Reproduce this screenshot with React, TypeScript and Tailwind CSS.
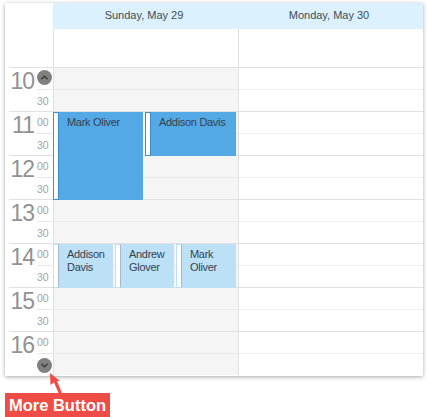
import { ChevronDown, ChevronUp } from "lucide-react"

const hours = [10, 11, 12, 13, 14, 15, 16]

const Event = ({ cls, dark, children }: { cls: string; dark?: boolean; children: string }) => (
  <div className={`absolute flex ${cls} ${dark ? "bg-[#53a9e6]" : "bg-[#bce1f7]"}`}>
    <div className={`w-[6px] shrink-0 bg-white border ${dark ? "border-[#3d8fcb]" : "border-[#bce1f7] border-r-[#a4b9c9]"}`} />
    <div className="pl-[8px] pt-[4px] text-[11px] leading-[13px] tracking-[-0.3px] text-[#37424f]">{children}</div>
  </div>
)

export default function App() {
  return (
    <div className="relative w-[428px] h-[417px] bg-white overflow-hidden font-['Liberation_Sans',sans-serif]">
      <div className="absolute left-[5px] top-[3px] w-[418px] h-[373px] bg-white shadow-[0_1px_4px_rgba(0,0,0,0.35)] flex">
        {/* time ruler */}
        <div className="w-[48px] shrink-0 flex flex-col">
          <div className="h-[64px] shrink-0" />
          {hours.map((h) => (
            <div key={h} className="h-[44px] shrink-0 flex ml-[4px] border-t border-[#e0e0e0] first:border-t-transparent w-[44px]">
              <div className="w-[28px] text-right pr-[3px] text-[23px] leading-[30px] mt-[-2px] text-[#929292] tracking-[-1px]">{h}</div>
              <div className="flex-1 flex flex-col text-[10.5px] text-[#a3a3a3]">
                <div className="h-[22px] shrink-0 border-b border-[#e8e8e8] leading-[20px]">{h === 10 ? "" : "00"}</div>
                <div className="h-[21px] leading-[22px]">{h === 16 ? "" : "30"}</div>
              </div>
            </div>
          ))}
        </div>

        <div className="flex-1 flex flex-col">
          <div className="h-[26px] shrink-0 bg-[#dbf2fe] flex text-[11px] leading-[25px] text-[#3f4a5a] text-center">
            <div className="w-[186px] pr-[4px]">Sunday, May 29</div>
            <div className="flex-1 pr-[4px]">Monday, May 30</div>
          </div>
          <div className="relative flex-1 flex border-l border-[#e0e0e0]">
            <div className="w-[185px] border-r border-[#e0e0e0] flex flex-col">
              <div className="h-[38px] shrink-0 bg-white" />
              {hours.map((h) => (
                <div key={h} className="h-[44px] shrink-0 bg-[#f5f5f5] border-t border-[#e0e0e0] flex flex-col">
                  <div className="h-[22px] shrink-0 border-b border-[#ebebeb]" />
                </div>
              ))}
            </div>
            <div className="flex-1 flex flex-col">
              <div className="h-[38px] shrink-0" />
              {hours.map((h) => (
                <div key={h} className="h-[44px] shrink-0 border-t border-[#e0e0e0] flex flex-col">
                  <div className="h-[22px] shrink-0 border-b border-[#efefef]" />
                </div>
              ))}
            </div>

            <Event dark cls="left-[-1px] top-[83px] w-[90px] h-[88px]">Mark Oliver</Event>
            <Event dark cls="left-[91px] top-[83px] w-[91px] h-[44px]">Addison Davis</Event>
            <Event cls="left-[-1px] top-[215px] w-[60px] h-[44px]">Addison Davis</Event>
            <Event cls="left-[61px] top-[215px] w-[59px] h-[44px]">Andrew Glover</Event>
            <Event cls="left-[122px] top-[215px] w-[60px] h-[44px]">Mark Oliver</Event>
          </div>
        </div>

        {/* more buttons */}
        <div className="absolute left-[32px] top-[67px] w-[15px] h-[15px] rounded-full bg-[#808080] flex items-center justify-center">
          <ChevronUp size={11} strokeWidth={3} className="text-[#333333]" />
        </div>
        <div className="absolute left-[32px] top-[355px] w-[15px] h-[15px] rounded-full bg-[#808080] flex items-center justify-center">
          <ChevronDown size={11} strokeWidth={3} className="text-[#333333]" />
        </div>
      </div>

      {/* callout */}
      <svg className="absolute left-[45px] top-[370px]" width="20" height="26" viewBox="0 0 20 26">
        <path d="M5 3 L5.5 15 L9 12.5 L14 24 L17 23 L12 11 L15 11 Z" fill="#ee4c45" />
      </svg>
      <div className="absolute left-[5px] top-[393px] w-[105px] h-[24px] bg-[#ee4c45] text-white font-bold text-[16.5px] leading-[24px] text-center">
        More Button
      </div>
    </div>
  )
}
